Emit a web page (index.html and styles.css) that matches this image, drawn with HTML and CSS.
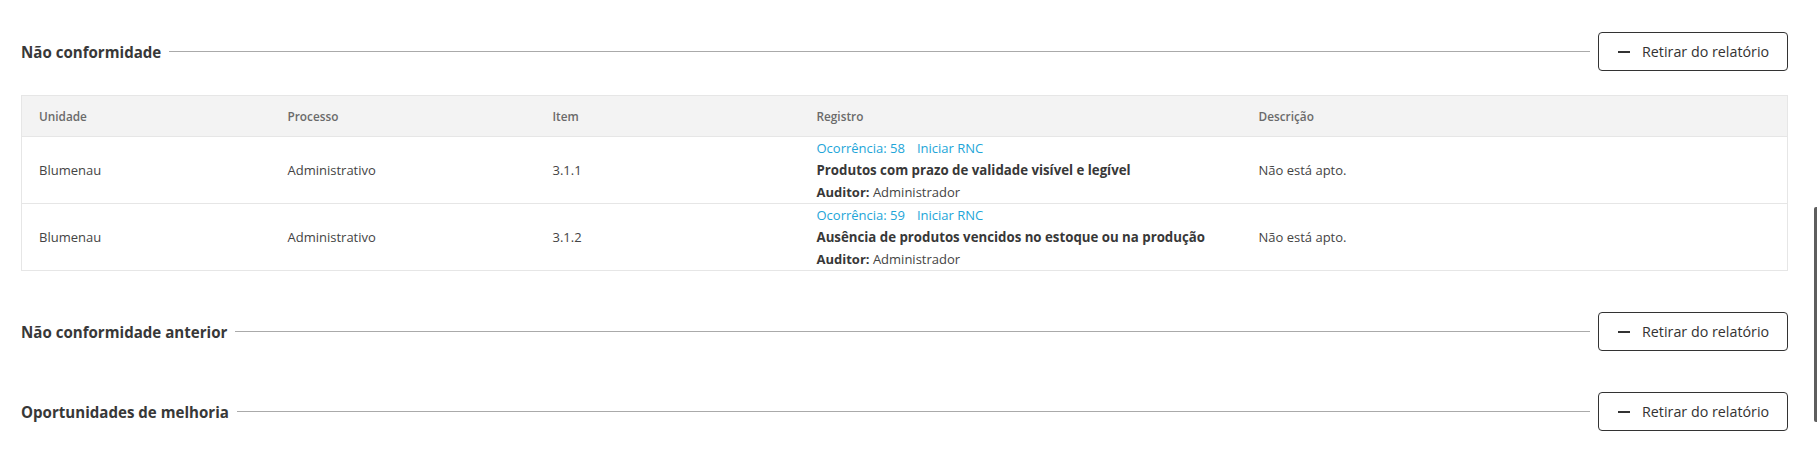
FILE: index.html
```html
<!DOCTYPE html>
<html lang="pt-BR">
<head>
<meta charset="utf-8">
<title>Relatório</title>
<link rel="stylesheet" href="styles.css">
</head>
<body>
<div class="page">
  <section class="section">
    <div class="section-head">
      <h2 class="section-title">Não conformidade</h2>
      <div class="section-rule"></div>
      <button class="btn-remove" type="button"><span class="minus"></span><span>Retirar do relatório</span></button>
    </div>
    <table class="grid">
      <colgroup>
        <col class="c1"><col class="c2"><col class="c3"><col class="c4"><col class="c5">
      </colgroup>
      <thead>
        <tr><th>Unidade</th><th>Processo</th><th>Item</th><th>Registro</th><th>Descrição</th></tr>
      </thead>
      <tbody>
        <tr>
          <td>Blumenau</td>
          <td>Administrativo</td>
          <td>3.1.1</td>
          <td>
            <div class="links"><a href="#">Ocorrência: 58</a><a href="#">Iniciar RNC</a></div>
            <div class="reg-title">Produtos com prazo de validade visível e legível</div>
            <div><b>Auditor:</b> Administrador</div>
          </td>
          <td>Não está apto.</td>
        </tr>
        <tr>
          <td>Blumenau</td>
          <td>Administrativo</td>
          <td>3.1.2</td>
          <td>
            <div class="links"><a href="#">Ocorrência: 59</a><a href="#">Iniciar RNC</a></div>
            <div class="reg-title">Ausência de produtos vencidos no estoque ou na produção</div>
            <div><b>Auditor:</b> Administrador</div>
          </td>
          <td>Não está apto.</td>
        </tr>
      </tbody>
    </table>
  </section>

  <section class="section">
    <div class="section-head">
      <h2 class="section-title">Não conformidade anterior</h2>
      <div class="section-rule"></div>
      <button class="btn-remove" type="button"><span class="minus"></span><span>Retirar do relatório</span></button>
    </div>
  </section>

  <section class="section">
    <div class="section-head">
      <h2 class="section-title">Oportunidades de melhoria</h2>
      <div class="section-rule"></div>
      <button class="btn-remove" type="button"><span class="minus"></span><span>Retirar do relatório</span></button>
    </div>
  </section>
</div>
<div class="scroll-thumb"></div>
</body>
</html>
```

FILE: styles.css
```css
html, body {
  margin: 0;
  padding: 0;
  background: #fff;
}

body {
  font-family: "Open Sans", "Noto Sans", "Liberation Sans", sans-serif;
  color: #444;
  font-size: 13px;
}

.page {
  padding: 32px 29px 0 21px;
  display: flex;
  flex-direction: column;
  gap: 41px;
}

.section {
  display: flex;
  flex-direction: column;
  gap: 24px;
}

.section-head {
  display: flex;
  align-items: center;
  gap: 8px;
  height: 39px;
}

.section-title {
  margin: 0;
  font-size: 15.1px;
  font-weight: 700;
  color: #383838;
  white-space: nowrap;
  line-height: 20px;
}

.section-rule {
  flex: 1;
  height: 1px;
  background: #aaaaaa;
}

.btn-remove {
  box-sizing: border-box;
  height: 39px;
  width: 190px;
  display: flex;
  align-items: center;
  gap: 12px;
  padding: 0 0 0 19px;
  border: 1px solid #333;
  border-radius: 4px;
  background: #fff;
  font-family: inherit;
  font-size: 14.3px;
  color: #333;
  cursor: pointer;
}

.minus {
  display: block;
  width: 12px;
  height: 2px;
  background: #333;
}

.grid {
  width: 100%;
  border-collapse: collapse;
  table-layout: fixed;
  border: 1px solid #e6e6e6;
}

.c1 { width: 249px; }
.c2 { width: 265px; }
.c3 { width: 264px; }
.c4 { width: 442px; }
.c5 { width: auto; }

.grid th {
  height: 40px;
  padding: 0 17px;
  background: #f3f3f3;
  text-align: left;
  font-size: 11.8px;
  font-weight: 600;
  color: #6a6a6a;
}

.grid td {
  padding: 0 17px;
  height: 66px;
  line-height: 22px;
  vertical-align: middle;
  border-top: 1px solid #e6e6e6;
  color: #444;
}

.links {
  display: flex;
  gap: 12px;
}

.links a {
  color: #22a5d8;
  text-decoration: none;
}

.reg-title {
  font-weight: 700;
  font-size: 13.25px;
  color: #383838;
}

.grid b {
  font-weight: 700;
  color: #383838;
}

.scroll-thumb {
  position: fixed;
  right: 0;
  top: 207px;
  width: 3px;
  height: 215px;
  background: #5e5e5e;
  border-radius: 2px 0 0 2px;
}
```
